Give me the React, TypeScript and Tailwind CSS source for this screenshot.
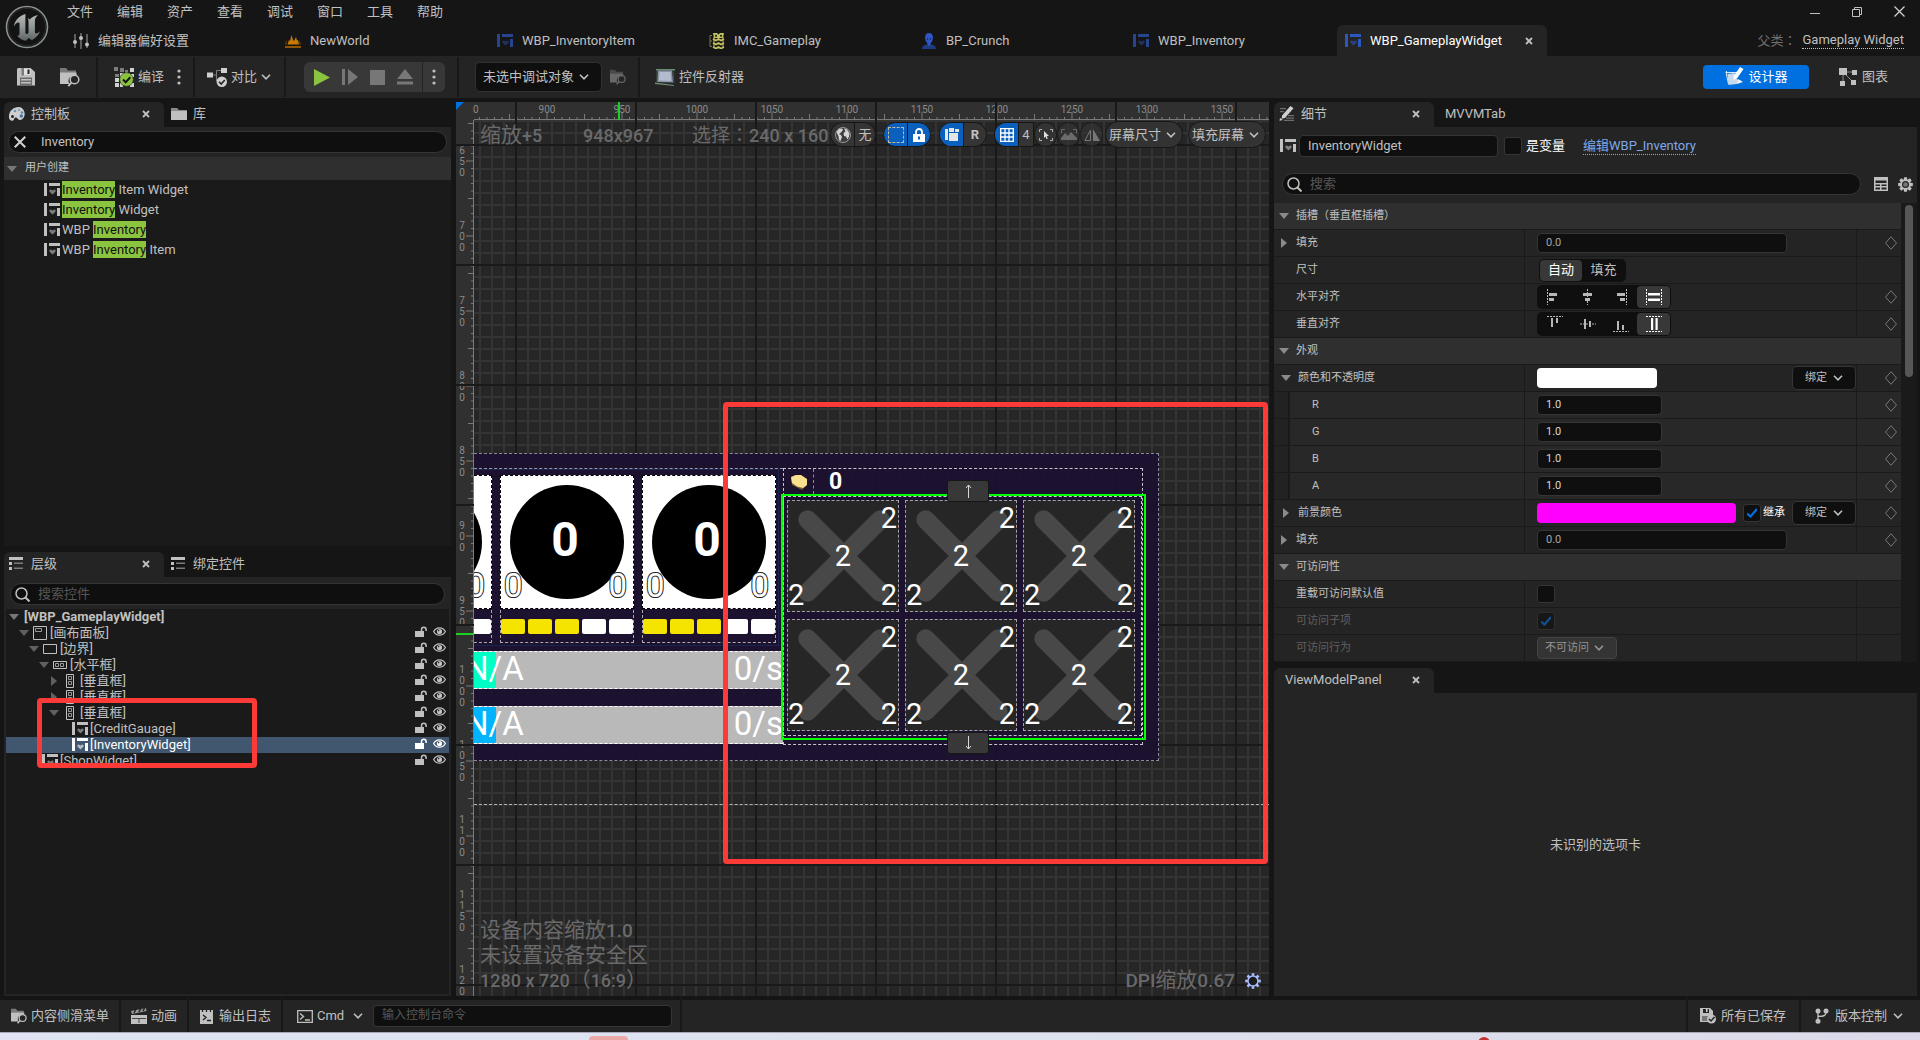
import React, { ReactNode } from "react";
import { clsx } from "clsx";

type IconProps = { className?: string };

/* ---------- icons ---------- */

function WidgetIcon({ className = "text-[#c0c0c0]" }: IconProps) {
  return (
    <svg className={clsx("h-[14px] w-4 shrink-0", className)} viewBox="0 0 16 14" fill="currentColor" aria-hidden="true">
      <path d="M0 0h3v13H0zM5 0h11v3H5zM13 5h3v8h-3z" />
      <path opacity=".6" d="M8.500 11.500 5.600 8.700c-.8-1 .3-2.600 1.700-2 .6.2.9.6 1.200.9.3-.3.6-.7 1.200-.9 1.400-.6 2.500 1 1.700 2z" />
    </svg>
  );
}

function UnrealLogo() {
  return (
    <svg className="size-[44px] shrink-0" viewBox="0 0 44 44" aria-label="Unreal">
      <defs>
        <linearGradient id="metal" x1="0" y1="0" x2="0" y2="1">
          <stop offset="0" stopColor="#b8b8b8" />
          <stop offset=".5" stopColor="#8f9596" />
          <stop offset="1" stopColor="#5e6262" />
        </linearGradient>
      </defs>
      <circle cx="22" cy="22" r="20.5" fill="#131313" stroke="#8c9191" strokeWidth="1.6" />
      <circle cx="22" cy="22" r="18.6" fill="none" stroke="#2a2d2d" strokeWidth="1" />
      <path
        fill="url(#metal)"
        d="M20.500 9C14.600 10.500 9.500 15.500 8.800 21.500c1.700-2.600 3.600-4.300 4.900-3.900.9.300.8 1.300.8 2.400v8.200c0 2.200-.9 2.700-2.500 2.400 2.300 3.200 5.600 4.800 9 5.200l2.700-2.800 3.100 2.200c3.700-1.700 6.700-4.800 8.200-8.900-2.100 2-3.700 2.600-4.600 2-.5-.4-.5-1.200-.5-2.200V15.500c0-2 1.600-4.200 3-5.600-3.400.5-6.600 2.500-8.100 4.500-.6-.8-1.400-1.100-2.400-.9.900.8 1.100 1.600 1.100 2.600v12c-1.300 1.300-3.100 1.500-3.100-.8V14.500c0-2.300 0-4 .1-5.500z"
      />
    </svg>
  );
}

function SlidersIcon() {
  return (
    <svg className="size-4" viewBox="0 0 16 16" fill="#c0c0c0" aria-hidden="true">
      <path opacity=".6" d="M1.300 1h1.400v14H1.300zM7.300 0h1.400v16H7.300zM13.300 1h1.400v14h-1.400z" />
      <circle cx="2" cy="9" r="2" /><circle cx="8" cy="5" r="2" /><circle cx="14" cy="11.500" r="2" />
    </svg>
  );
}

function WorldIcon() {
  return (
    <svg className="size-4" viewBox="0 0 16 16" aria-hidden="true">
      <path fill="#8f5500" d="M0 13h16v2H0z" />
      <path fill="#c77b07" d="M2.500 11.500 4 7l1 1 1.500-6L8 7l1 1 2-4 1 3.500 1-.5 1 4.500z" />
      <path fill="#74480a" d="m0 11.500 1.500-5v5zm16 0-1.500-5v5z" />
    </svg>
  );
}

function MappingIcon() {
  return (
    <svg className="size-4" viewBox="0 0 16 16" fill="none" aria-hidden="true">
      <path stroke="#7c7a45" d="M3 2.500H1v11h2M1 8h2" />
      <path stroke="#c3bf63" strokeWidth="1.800" d="m4 6 3 1.500L9.500 6l2.500 1.500L15 6M4 10l3 1.500L9.500 10l2.500 1.500 3-1.500M4 14l3 1.500L9.500 14l2.500 1.500 3-1.500" />
      <path fill="#c3bf63" d="M4 0h4l1.500 1.500L11 0h4l-1 5h-3.500l-1 1-1-1H5z" />
      <circle cx="7" cy="2.800" r="1" fill="#151515" /><circle cx="12" cy="2.800" r="1" fill="#151515" />
      <path stroke="#c3bf63" d="M5 4v11M14 4v11" />
    </svg>
  );
}

function PersonIcon() {
  return (
    <svg className="size-4" viewBox="0 0 16 16" aria-hidden="true">
      <path fill="#1d3c84" d="M1 16c0-3 2.500-4 4.500-4.500h5C12.500 12 15 13 15 16z" />
      <path fill="#2d57c4" d="M4 4.500C4 2 5.500 0 8 0s4 2 4 4.500c0 3-1.500 5-2.500 5.900V12L8 13l-1.500-1v-1.600C5.500 9.500 4 7.500 4 4.500z" />
      <circle cx="6.400" cy="6" r=".8" fill="#122a66" /><circle cx="9.600" cy="6" r=".8" fill="#122a66" />
    </svg>
  );
}

function SaveIcon() {
  return (
    <svg className="size-[18px]" viewBox="0 0 18 18" aria-hidden="true">
      <path fill="#c0c0c0" d="M1 0h12.500L18 4v13.500H0V1z" />
      <path fill="#6a6a6a" d="M3 9.500h12v8H3z" />
      <path fill="#c0c0c0" d="M4 11h10v1.500H4zm0 3h10v1.500H4z" />
      <path fill="#7b7b7b" d="M4.500 0H7v7.500H4.500z" /><path fill="#e2e2e2" d="M7 .8h6.500v6H7z" /><path fill="#222" d="M10.500 1.500h2v4.500h-2z" />
    </svg>
  );
}

function FolderSearchIcon({ className = "size-5 text-[#c0c0c0]" }: IconProps) {
  return (
    <svg className={className} viewBox="0 0 20 20" aria-hidden="true">
      <path fill="currentColor" opacity=".55" d="M0 1h6l2 2.500h8V6H0z" />
      <path fill="currentColor" d="M0 5.500h16.500V9a5.500 5.500 0 0 0-7 8H0z" />
      <circle cx="14.500" cy="12.500" r="4.300" fill="#242424" stroke="currentColor" strokeWidth="1.500" />
      <path stroke="currentColor" strokeWidth="2" d="m11.300 15.600-3 3.600" />
    </svg>
  );
}

function CompileIcon() {
  return (
    <svg className="size-5" viewBox="0 0 20 20" aria-hidden="true">
      <path fill="#7d7d7d" d="M0 0h4v4H0zM6 1h4v4H6zM11 3h3v3h-3zM1 7h4v3H1z" />
      <path fill="#d0d0d0" d="M16 1h4v4h-4zM12 6h4v3h-4zM6 6h4v4H6zM1 11h4v4H1zM1 16h4v4H1zM16 16h4v4h-4zM16 7h4v3h-4zM6 16h3v4H6z" />
      <circle cx="12.500" cy="12.500" r="6.800" fill="#8bc53f" stroke="#242424" strokeWidth=".6" />
      <path fill="none" stroke="#151515" strokeWidth="2" d="m9 12.500 2.700 2.700 4.600-5" />
    </svg>
  );
}

function DiffIcon() {
  return (
    <svg className="size-5" viewBox="0 0 20 20" aria-hidden="true">
      <path fill="none" stroke="#7d7d7d" d="M5 8h4.500V3.500H14M9.500 8v6H12" />
      <path fill="#d0d0d0" d="M0 5.500h6v5H0zM14 1h6v5h-6z" />
      <circle cx="14.800" cy="14.800" r="5.200" fill="#d0d0d0" />
      <path fill="none" stroke="#242424" strokeWidth="1.600" d="m12 14.800 2.200 2.200 3.600-4" />
    </svg>
  );
}

function DotsIcon() {
  return (
    <svg className="h-4 w-1" viewBox="0 0 4 16" fill="#c0c0c0" aria-hidden="true">
      <circle cx="2" cy="2" r="1.600" /><circle cx="2" cy="8" r="1.600" /><circle cx="2" cy="14" r="1.600" />
    </svg>
  );
}

function Chevron({ className = "text-[#c0c0c0]" }: IconProps) {
  return (
    <svg className={clsx("h-[6px] w-[10px] shrink-0", className)} viewBox="0 0 10 6" fill="none" stroke="currentColor" strokeWidth="1.600" aria-hidden="true">
      <path d="m1 .8 4 4 4-4" />
    </svg>
  );
}

function CloseX({ className = "size-2 text-[#c0c0c0]", weight = 1.8 }: IconProps & { weight?: number }) {
  return (
    <svg className={className} viewBox="0 0 8 8" stroke="currentColor" strokeWidth={weight} aria-hidden="true">
      <path d="m1 1 6 6M7 1 1 7" />
    </svg>
  );
}

function PaletteIcon() {
  return (
    <svg className="h-[14px] w-4" viewBox="0 0 16 14" aria-hidden="true">
      <path fill="#cfcfcf" d="M9.500 0C5 0 .5 3.500 0 8.500c-.3 3 1 5.500 3.500 5.200 1.400-.2 1.300-1.700 2.200-2.700 1-1 2.300-.3 3.300 1 1.300 1.700 4.500 1 6-2 2-4-.5-10-5.500-10z" />
      <circle cx="3.500" cy="9.500" r="1.500" fill="#242424" /><circle cx="6" cy="4" r="1.300" fill="#6d93b8" /><circle cx="10" cy="3" r="1.300" fill="#86a9c9" /><circle cx="13" cy="5.500" r="1.300" fill="#5d86b0" /><circle cx="12.300" cy="9" r="1.700" fill="#3f74ad" />
    </svg>
  );
}

function FolderIcon() {
  return (
    <svg className="h-3 w-4" viewBox="0 0 16 12" aria-hidden="true">
      <path fill="#8a8a8a" d="M0 0h6l2 2h8v2H0z" /><path fill="#c0c0c0" d="M0 3h16v9H0z" />
    </svg>
  );
}

function ListIcon() {
  return (
    <svg className="h-[13px] w-[14px]" viewBox="0 0 14 13" aria-hidden="true">
      <path fill="#c0c0c0" d="M0 0h14v3H0zM0 5h3v3H0zM0 10h3v3H0z" /><path fill="#7b7b7b" d="M5 5.500h9V7H5zM5 10.500h9V12H5z" />
    </svg>
  );
}

function PencilListIcon() {
  return (
    <svg className="size-[15px]" viewBox="0 0 15 15" aria-hidden="true">
      <path fill="#6e6e6e" d="M1 2h6v1.200H1zM1 5h4v1.200H1zM9 9h6v1.200H9zM7 11.500h8v1.200H7zM5 13.800h10V15H5z" />
      <path fill="#d0d0d0" d="m11.500 0 3 2.300L6 12l-3.300.8L3 9.500zM1 12l3 2-3.500.8z" />
    </svg>
  );
}

function SearchIcon() {
  return (
    <svg className="size-[15px] shrink-0" viewBox="0 0 15 15" fill="none" stroke="#c0c0c0" strokeWidth="1.500" aria-hidden="true">
      <circle cx="6.500" cy="6.500" r="5.500" /><path strokeWidth="2" d="m10.500 10.500 4 4" />
    </svg>
  );
}

function TableIcon() {
  return (
    <svg className="size-[14px]" viewBox="0 0 14 14" aria-hidden="true">
      <path fill="#c0c0c0" fillRule="evenodd" d="M0 0h14v14H0zM1.500 3.500V6h11V3.500zm0 4V9H6V7.500zm6 0V9h5V7.500zm-6 3v2H6v-2zm6 0v2h5v-2z" />
    </svg>
  );
}

const TEETH = [0, 45, 90, 135, 180, 225, 270, 315];

function GearIcon() {
  return (
    <svg className="size-[15px]" viewBox="-8 -8 16 16" aria-hidden="true">
      {TEETH.map((a) => (
        <path key={a} transform={`rotate(${a})`} fill="#c0c0c0" d="M-1.500-7.800h3l.5 3h-4z" />
      ))}
      <circle r="4.600" fill="none" stroke="#c0c0c0" strokeWidth="1.700" />
      <circle r="2.500" fill="#777" />
    </svg>
  );
}

function DpiGearIcon() {
  return (
    <svg className="size-4" viewBox="-8 -8 16 16" aria-hidden="true">
      {TEETH.map((a) => (
        <path key={a} transform={`rotate(${a})`} fill="#a9bfff" d="M-1.300-7.800h2.600v2.600h-2.600z" />
      ))}
      <circle r="5" fill="#1c1c1c" stroke="#a9bfff" strokeWidth="1.500" />
    </svg>
  );
}

function LockIcon({ bright }: { bright?: boolean }) {
  return (
    <svg className={clsx("h-[11px] w-3", bright ? "text-white" : "text-[#c0c0c0]")} viewBox="0 0 12 11" aria-hidden="true">
      <path fill="currentColor" d="M0 5h9v6H0z" />
      <path fill="none" stroke="currentColor" strokeWidth="1.500" d="M6.500 5V3.500a2.300 2.300 0 0 1 4.600 0V5" />
    </svg>
  );
}

function EyeIcon({ bright }: { bright?: boolean }) {
  return (
    <svg className={clsx("h-[9px] w-[13px]", bright ? "text-white" : "text-[#c0c0c0]")} viewBox="0 0 13 9" aria-hidden="true">
      <path fill="none" stroke="currentColor" strokeWidth="1.200" d="M.6 4.500C2 2 4 .8 6.500.8S11 2 12.400 4.500C11 7 9 8.200 6.500 8.200S2 7 .6 4.500z" />
      <circle cx="6.500" cy="4.500" r="2.600" fill="currentColor" /><circle cx="5.700" cy="3.600" r=".8" fill="#333" />
    </svg>
  );
}

function Triangle({ open, className = "text-[#777]" }: { open: boolean; className?: string }) {
  return open ? (
    <svg className={clsx("h-[6px] w-[10px]", className)} viewBox="0 0 10 6" fill="currentColor" aria-hidden="true"><path d="M0 0h10L5 6z" /></svg>
  ) : (
    <svg className={clsx("h-[10px] w-[6px]", className)} viewBox="0 0 6 10" fill="currentColor" aria-hidden="true"><path d="M0 0v10l6-5z" /></svg>
  );
}

function CanvasPanelIcon() {
  return <svg className="size-[14px]" viewBox="0 0 14 14" fill="none" stroke="#c0c0c0" aria-hidden="true"><path d="M.5.500h13v13H.5z" /><path stroke="#999" d="M2.500 2.500h6v3h-6z" /></svg>;
}
function BorderIcon() {
  return <svg className="h-[10px] w-[14px]" viewBox="0 0 14 10" fill="none" stroke="#c0c0c0" aria-hidden="true"><path d="M.5.500h13v9H.5z" /></svg>;
}
function HBoxIcon() {
  return <svg className="h-2 w-[14px]" viewBox="0 0 14 8" fill="none" stroke="#c0c0c0" aria-hidden="true"><path d="M.5.500h13v7H.5z" /><path stroke="#999" d="M2.500 2.500h3v3h-3zM7.500 2.500h3v3h-3z" /></svg>;
}
function VBoxIcon() {
  return <svg className="h-[14px] w-2" viewBox="0 0 8 14" fill="none" stroke="#c0c0c0" aria-hidden="true"><path d="M.5.500h7v13h-7z" /><path stroke="#999" d="M2.500 2.500h3v3h-3zM2.500 7.500h3v3h-3z" /></svg>;
}

/* ---------- shared controls ---------- */

function Picker({ label, value, className, chevron, pad = "pl-2 pr-6 text-[13px]" }: { label: string; value: string; className?: string; chevron?: string; pad?: string }) {
  return (
    <span className={clsx("relative flex shrink-0 items-center", className)}>
      <select aria-label={label} className={clsx("h-full w-full appearance-none bg-transparent outline-none", pad)}>
        <option>{value}</option>
      </select>
      <span className="pointer-events-none absolute right-2 flex"><Chevron className={chevron} /></span>
    </span>
  );
}

function Check({ id, checked = false, disabled = false, label }: { id: string; checked?: boolean; disabled?: boolean; label?: string }) {
  return (
    <span className={clsx("relative flex size-[18px] shrink-0", disabled && "opacity-60")}>
      <input id={id} type="checkbox" defaultChecked={checked} disabled={disabled} aria-label={label}
        className="peer size-full appearance-none rounded-[3px] border border-[#353535] bg-[#0f0f0f]" />
      <svg className="pointer-events-none absolute inset-1 hidden peer-checked:block" viewBox="0 0 10 10" fill="none" stroke="#0070e0" strokeWidth="2.200" aria-hidden="true">
        <path d="m0 5.500 3.500 3L10 1" />
      </svg>
    </span>
  );
}

function PanelTab({ icon, title, active, onlyText }: { icon?: ReactNode; title: string; active?: boolean; onlyText?: boolean }) {
  return (
    <div className={clsx("flex h-[25px] items-center rounded-t-md pb-[2px]", active ? "w-[160px] bg-[#242424]" : "")}>
      <button className={clsx("flex flex-1 items-center text-left text-[13px] leading-4", onlyText ? "pl-[11px]" : active ? "pl-[5px]" : "pl-[7px]")}>
        {icon && <span className="flex w-[22px] items-center">{icon}</span>}
        {title}
      </button>
      {active && <button aria-label={`关闭 ${title}`} className="mr-[14px] flex"><CloseX /></button>}
    </div>
  );
}

/* ---------- title bar ---------- */

const MENUS = ["文件", "编辑", "资产", "查看", "调试", "窗口", "工具", "帮助"];

const DOCS: { title: string; icon: ReactNode; active?: boolean }[] = [
  { title: "编辑器偏好设置", icon: <SlidersIcon /> },
  { title: "NewWorld", icon: <WorldIcon /> },
  { title: "WBP_InventoryItem", icon: <WidgetIcon className="text-[#27458f]" /> },
  { title: "IMC_Gameplay", icon: <MappingIcon /> },
  { title: "BP_Crunch", icon: <PersonIcon /> },
  { title: "WBP_Inventory", icon: <WidgetIcon className="text-[#27458f]" /> },
  { title: "WBP_GameplayWidget", icon: <WidgetIcon className="text-[#2b57c0]" />, active: true },
];

function TitleBar() {
  return (
    <header className="flex h-14 pl-[5px]">
      <div className="pt-[5px]"><UnrealLogo /></div>
      <div className="flex min-w-0 flex-1 flex-col">
        <div className="flex h-[25px] items-center justify-between pb-[2px] pl-[18px] pr-[15px]">
          <nav className="flex gap-6">
            {MENUS.map((m) => <button key={m} className="text-[13px] leading-4">{m}</button>)}
          </nav>
          <div className="flex items-center gap-8">
            <button aria-label="最小化" className="flex"><svg className="size-[10px]" viewBox="0 0 10 10" stroke="#c0c0c0"><path d="M0 6.500h10" /></svg></button>
            <button aria-label="还原" className="flex"><svg className="size-[10px]" viewBox="0 0 10 10" fill="none" stroke="#c0c0c0"><path d="M.5 2.500h7v7h-7zM2.500 2V.500h7v7H8" /></svg></button>
            <button aria-label="关闭" className="flex"><svg className="size-[11px]" viewBox="0 0 11 11" stroke="#d0d0d0" strokeWidth="1.300"><path d="m.5.500 10 10M10.500.500l-10 10" /></svg></button>
          </div>
        </div>
        <div className="flex h-[31px] items-center pl-4">
          {DOCS.map((d) => (
            <div key={d.title} className={clsx("flex h-full items-center rounded-t-md pl-2", d.active ? "w-[210px] bg-[#242424] text-white" : "w-[212px]")}>
              <button className="flex flex-1 items-center gap-[9px] text-[13px] leading-4">{d.icon}{d.title}</button>
              {d.active && <button aria-label="关闭标签" className="mr-[14px] flex"><CloseX /></button>}
            </div>
          ))}
          <div className="ml-auto flex items-center pr-4 text-[13px] leading-4">
            <span className="font-['Roboto','Noto_Sans_CJK_TC',sans-serif] text-[#707070]">父类：</span>
            <a href="#parent" className="ml-[6px] border-b border-dotted border-[#c0c0c0]">Gameplay Widget</a>
          </div>
        </div>
      </div>
    </header>
  );
}

function Sep() {
  return <span className="h-10 w-[2px] shrink-0 bg-[#181818]" />;
}

function Toolbar() {
  return (
    <div className="flex h-[42px] items-center bg-[#242424] text-[13px] leading-4">
      <div className="flex w-[96px] items-center gap-[25px] pl-[17px]">
        <button aria-label="保存" className="flex"><SaveIcon /></button>
        <button aria-label="浏览" className="flex"><FolderSearchIcon /></button>
      </div>
      <Sep />
      <div className="flex w-[95px] items-center justify-between pl-4 pr-3">
        <button className="flex items-center gap-1"><CompileIcon />编译</button>
        <button aria-label="编译选项" className="flex"><DotsIcon /></button>
      </div>
      <Sep />
      <div className="flex w-[89px] items-center pl-3">
        <button className="flex items-center gap-1"><DiffIcon />对比<Chevron /></button>
      </div>
      <Sep />
      <div className="ml-[18px] mr-3 flex h-[30px] items-center rounded-md bg-[#383838]">
        <div className="flex h-full w-[118px] items-center gap-[12px] pl-[10px]">
          <button aria-label="运行" className="flex"><svg className="h-[17px] w-4" viewBox="0 0 16 17"><path fill="#8bc53f" d="M0 0v17l16-8.500z" /></svg></button>
          <button aria-label="步进" className="flex"><svg className="size-4" viewBox="0 0 16 16" fill="#777"><path d="M0 0h3v16H0zM6 0v16l10-8z" /></svg></button>
          <button aria-label="停止" className="flex"><span className="size-[15px] bg-[#777]" /></button>
          <button aria-label="弹出" className="flex"><svg className="size-4" viewBox="0 0 16 16" fill="#777"><path d="M8 0 0 10h16zM0 12.500h16v3H0z" /></svg></button>
        </div>
        <span className="h-full w-px bg-[#242424]" />
        <button aria-label="运行选项" className="flex h-full w-[22px] items-center justify-center"><DotsIcon /></button>
      </div>
      <Sep />
      <Picker label="调试对象" value="未选中调试对象" className="ml-[16px] h-[30px] w-[127px] rounded-[5px] border border-[#303030] bg-[#0f0f0f]" pad="pl-[7px] pr-6 text-[13px]" chevron="text-[#c0c0c0] mr-1" />
      <button aria-label="查找调试对象" className="ml-2 flex"><FolderSearchIcon className="size-4 text-[#686868]" /></button>
      <span className="ml-3 flex"><Sep /></span>
      <button className="ml-[15px] flex items-center gap-1">
        <svg className="size-5" viewBox="0 0 20 20" aria-hidden="true">
          <path fill="#6f8f74" d="M1 2h19v1.500H1zM0 15.500l19 2.500v1L0 17z" />
          <path fill="#8b93a8" d="M3 3.500h14l1 12L2 15z" /><path fill="#b3bccf" d="M4.500 5h11l.8 9L4 13.500z" />
          <path stroke="#3c5c42" d="M2 4v11M18 4l1 12" />
        </svg>
        控件反射器
      </button>
      <div className="ml-auto flex items-center gap-[30px] pr-[32px]">
        <button className="flex h-6 w-[106px] items-center justify-center gap-1 rounded bg-[#0070e0] text-white">
          <svg className="size-5" viewBox="0 0 20 20" aria-hidden="true">
            <path fill="none" stroke="#dbe8f5" d="M1.500 5.500h12M2.500 4v4l2 9" /><path fill="#c9daea" d="m3.500 7 7-1 2 6 5 2-5 3-8 1z" />
            <path fill="#fff" d="m16 0 3.500 2L13 11.500 9.500 13l.2-4z" /><path fill="#eef4fa" d="m14 12 5 3-6 2z" />
          </svg>
          设计器
        </button>
        <button className="flex items-center gap-[5px]">
          <svg className="size-[18px]" viewBox="0 0 18 18" aria-hidden="true">
            <path fill="none" stroke="#888" d="M4 4h11M4 4v11M4 4l11 11" /><path fill="#c0c0c0" d="M0 0h8v7H0zM13 2h5v5h-5zM1 13h5v5H1zM12 12h5v5h-5z" />
          </svg>
          图表
        </button>
      </div>
    </div>
  );
}

/* ---------- left column ---------- */

function Hit() {
  return <mark className="bg-[#8bc53f] py-px text-[#111]">Inventory</mark>;
}

function PalettePanel() {
  const rows: ReactNode[] = [
    <><Hit /> Item Widget</>,
    <><Hit /> Widget</>,
    <>WBP <Hit /></>,
    <>WBP <Hit /> Item</>,
  ];
  return (
    <section className="flex min-h-0 flex-1 flex-col">
      <div className="flex"><PanelTab active icon={<PaletteIcon />} title="控制板" /><PanelTab icon={<FolderIcon />} title="库" /></div>
      <div className="bg-[#242424] px-1 py-1">
        <div className="flex h-[22px] items-center rounded-full border border-[#353535] bg-[#0f0f0f] pl-[4px]">
          <button aria-label="清除" className="flex"><CloseX weight={1.2} className="size-[14px] text-[#d0d0d0]" /></button>
          <input aria-label="搜索控制板" defaultValue="Inventory" className="ml-[14px] h-5 flex-1 bg-transparent pb-[2px] text-[13px] outline-none" />
        </div>
      </div>
      <button className="flex h-[23px] items-center bg-[#2f2f2f] pl-[3px] text-left text-[11px]"><Triangle open /><span className="ml-2">用户创建</span></button>
      <ul className="flex-1 bg-[#1a1a1a] text-[13px]">
        {rows.map((r, i) => (
          <li key={i} className="flex h-5 items-center whitespace-pre pl-10 leading-4"><WidgetIcon /><span className="ml-[2px]">{r}</span></li>
        ))}
      </ul>
    </section>
  );
}

type Node = { depth: number; text: string; icon?: ReactNode; state: "open" | "closed" | "leaf"; selected?: boolean };
const NODES: Node[] = [
  { depth: 1, text: "[画布面板]", icon: <CanvasPanelIcon />, state: "open" },
  { depth: 2, text: "[边界]", icon: <BorderIcon />, state: "open" },
  { depth: 3, text: "[水平框]", icon: <HBoxIcon />, state: "open" },
  { depth: 4, text: "[垂直框]", icon: <VBoxIcon />, state: "closed" },
  { depth: 4, text: "[垂直框]", icon: <VBoxIcon />, state: "closed" },
  { depth: 4, text: "[垂直框]", icon: <VBoxIcon />, state: "open" },
  { depth: 5, text: "[CreditGauage]", icon: <WidgetIcon />, state: "leaf" },
  { depth: 5, text: "[InventoryWidget]", icon: <WidgetIcon className="text-white" />, state: "leaf", selected: true },
  { depth: 2, text: "[ShopWidget]", icon: <WidgetIcon />, state: "leaf" },
];
const INDENT = ["pl-0", "pl-[10px]", "pl-5", "pl-[30px]", "pl-10", "pl-[50px]"];

function HierarchyPanel() {
  return (
    <section className="flex min-h-0 flex-1 flex-col">
      <div className="flex"><PanelTab active icon={<ListIcon />} title="层级" /><PanelTab icon={<ListIcon />} title="绑定控件" /></div>
      <div className="flex flex-1 flex-col bg-[#242424] px-[2px] pb-[2px]">
        <div className="px-1 pb-1 pt-[6px]">
          <div className="flex h-[22px] items-center rounded-full border border-[#353535] bg-[#0f0f0f] pl-[4px]">
            <SearchIcon />
            <input aria-label="搜索控件" placeholder="搜索控件" className="ml-2 h-5 flex-1 bg-transparent pb-[2px] text-[13px] outline-none placeholder:text-[#575757]" />
          </div>
        </div>
        <ul className="relative flex-1 bg-[#1a1a1a] text-[13px] leading-4">
          <li className="flex h-4 items-center pl-[3px] font-bold"><Triangle open /><span className="ml-[5px]">[WBP_GameplayWidget]</span></li>
          {NODES.map((n, i) => (
            <li key={i} className={clsx("flex h-4 items-center pr-[3px]", n.selected && "bg-[#40576f] text-white")}>
              <span className={clsx("flex items-center", INDENT[n.depth])}>
                <span className="ml-[3px] flex w-[10px] justify-center">{n.state !== "leaf" && <Triangle open={n.state === "open"} className="text-[#606060]" />}</span>
                <span className="ml-[3px] flex w-4 justify-center">{n.icon}</span>
                <span className="ml-[2px]">{n.text}</span>
              </span>
              <span className="ml-auto flex items-center gap-[6px] pb-[3px]">
                <button aria-label="锁定" className="flex"><LockIcon bright={n.selected} /></button>
                <button aria-label="可见性" className="flex"><EyeIcon bright={n.selected} /></button>
              </span>
            </li>
          ))}
          <li aria-hidden="true" className="pointer-events-none absolute left-[31px] top-[89px] h-[70px] w-[220px] rounded border-[5px] border-[#fc3a37]" />
        </ul>
      </div>
    </section>
  );
}

/* ---------- designer canvas ---------- */

const PX_PER_UNIT = 1.5;
const H_LABELS = [900, 950, 1000, 1050, 1100, 1150, 1200, 1250, 1300, 1350];
const V_LABELS = [650, 700, 750, 800, 850, 900, 950, 1000, 1050, 1100, 1150, 1200];
const TICKS = Array.from({ length: 115 }, (_, i) => i);

function Rulers() {
  return (
    <div aria-hidden="true" className="text-[10px] leading-[11px] text-[#8a8a8a]">
      <div className="absolute inset-x-0 top-0 h-[18px] bg-[#303030]" />
      <div className="absolute inset-y-0 left-0 w-[18px] bg-[#303030]" />
      <svg className="absolute left-0 top-0 h-[18px] w-full" stroke="#7a7a7a">
        <path d="M18 17.500h1000" />
        {TICKS.slice(1).map((i) => {
          const x = 16 + i * 5 * PX_PER_UNIT;
          const len = i % 10 === 0 ? 7 : i % 5 === 0 ? 5 : 2;
          return <path key={i} d={`M${x} ${17 - len}v${len}`} />;
        })}
      </svg>
      <svg className="absolute left-0 top-0 h-full w-[18px]" stroke="#7a7a7a">
        <path d="M17.500 18v1000" />
        {TICKS.map((i) => {
          const y = 59 + (i - 5) * 5 * PX_PER_UNIT;
          const len = i % 10 === 5 ? 7 : i % 5 === 0 ? 5 : 2;
          return y > 18 ? <path key={i} d={`M${17 - len} ${y}h${len}`} /> : null;
        })}
      </svg>
      <span className="absolute left-[17px] top-[2px]">0</span>
      {H_LABELS.map((n) => (
        <span key={n} className="absolute top-[2px] w-10 text-center" style={{ left: 71 + (n - 900) * PX_PER_UNIT }}>{n}</span>
      ))}
      {V_LABELS.map((n) => {
        const d = String(n).split("");
        return (
          <span key={n} className="absolute left-0 flex w-3 flex-col text-center" style={{ top: 59 + (n - 650) * PX_PER_UNIT - d.length * 5.5 }}>
            {d.map((c, i) => <span key={i}>{c}</span>)}
          </span>
        );
      })}
      <svg className="absolute left-0 top-0 size-2" viewBox="0 0 8 8"><path fill="#0070e0" d="M0 0h8L0 8z" /></svg>
      <span className="absolute left-[162px] top-0 h-[18px] w-[2px] bg-[#1fd11f]" />
      <span className="absolute left-0 top-[531px] h-[2px] w-[18px] bg-[#1fd11f]" />
    </div>
  );
}

const COUNT = "absolute bottom-1 text-[33px] leading-9 text-white [-webkit-text-stroke:2px_#222] [paint-order:stroke_fill]";

/* The first card is scrolled mostly out of view, so only its right counter is drawn. */
function AbilityCard({ partial }: { partial?: boolean }) {
  return (
    <div className="w-[134px] shrink-0 border border-dashed border-[#aaa]">
      <div className="relative -m-px flex h-[134px] items-center justify-center border border-dashed border-black bg-white">
        <div className="flex size-[114px] items-center justify-center rounded-full bg-black pb-1 pr-1 text-[48px] font-bold leading-none text-white">{!partial && "0"}</div>
        {!partial && <span className={clsx(COUNT, "left-[3px]")}>0</span>}
        <span className={clsx(COUNT, "right-[6px]")}>0</span>
      </div>
      <div className="flex gap-[3px] pb-2 pt-[11px]">
        {[1, 1, 1, 0, 0].map((on, i) => <span key={i} className={clsx("h-[15px] w-6 rounded-[2px]", on ? "bg-[#f5e300]" : "bg-white")} />)}
      </div>
    </div>
  );
}

function StatBar({ fill }: { fill: string }) {
  return (
    <div className="flex h-[38px] w-full border-y border-dashed border-white bg-[#b9b9b9] text-[33px] leading-[34px] text-white">
      <div className={clsx("h-full w-[22px] shrink-0 overflow-visible whitespace-nowrap", fill)}><span className="-ml-[9px]">N/A</span></div>
      <span className="ml-auto">0/s</span>
    </div>
  );
}

function Slot() {
  return (
    <div className="relative flex size-28 items-center justify-center border border-dashed border-[#a5a0ab] bg-[#262626] text-[29px] leading-none text-white">
      <svg className="absolute inset-0 size-full" viewBox="0 0 112 112" stroke="#484848" strokeWidth="19" strokeLinecap="round" aria-hidden="true"><path d="m20 19 74 74M94 19 20 93" /></svg>
      <span className="relative">2</span>
      <span className="absolute right-px top-[3px]">2</span>
      <span className="absolute bottom-px left-0">2</span>
      <span className="absolute bottom-px right-px">2</span>
    </div>
  );
}

const NUDGE = "absolute left-[164px] z-10 flex h-[22px] w-[42px] items-center justify-center rounded-[3px] border border-[#161616] bg-[#383838] text-[#d8d8d8]";

function HudPreview() {
  return (
    <div className="absolute left-[18px] top-[351px] flex h-[308px] w-[685px] border-y border-r border-dashed border-[#8f8a98] bg-[#1c1030f0] pb-[15px] pr-[15px] pt-[14px]">
      <div className="flex w-[309px] flex-col overflow-hidden border-t border-dashed border-[#9a97a5]">
        <div className="-ml-[117px] flex w-[422px] shrink-0 gap-2 border border-[#1b2450] pb-[2px] pt-[5px]"><AbilityCard partial /><AbilityCard /><AbilityCard /></div>
        <div className="mt-[5px] flex flex-col gap-[17px]"><StatBar fill="bg-[#00ffc4]" /><StatBar fill="bg-[#00b4ff]" /></div>
      </div>
      <div className="flex w-[360px] flex-col border border-dashed border-[#c8c5d0]">
        <div className="flex h-[25px] items-center">
          <span className="flex h-full w-[30px] items-center justify-center border-r border-dashed border-[#8f8a98]">
            <svg className="size-4" viewBox="0 0 16 16" aria-hidden="true"><path fill="#6e5c2c" d="m0 4 4-3 9 5 2 6-4 4-10-5z" /><path fill="#fbe08e" d="M5 1h5l6 4v6l-4 3-6-1.500-5-3.500L0 3z" /></svg>
          </span>
          <span className="ml-[15px] text-[23px] font-bold leading-none text-white">0</span>
        </div>
        <div className="relative -ml-[3px] h-[246px] w-[365px] shrink-0 border-2 border-[#00ff00]">
          <button aria-label="上移" className={clsx(NUDGE, "-top-4")}><svg className="h-[14px] w-[7px]" viewBox="0 0 7 14" fill="none" stroke="currentColor"><path d="M3.500 14V1M1 4l2.500-3L6 4" /></svg></button>
          <div className="grid h-[240px] w-[359px] grid-cols-[112px_112px_112px] content-start gap-x-[6px] gap-y-[7px] border border-dashed border-[#c8c5d0] pl-[3px] pt-[3px]">
            {[0, 1, 2, 3, 4, 5].map((i) => <Slot key={i} />)}
          </div>
          <button aria-label="下移" className={clsx(NUDGE, "-bottom-4")}><svg className="h-[14px] w-[7px]" viewBox="0 0 7 14" fill="none" stroke="currentColor"><path d="M3.500 0v13M1 10l2.500 3L6 10" /></svg></button>
        </div>
      </div>
    </div>
  );
}

const PILL = "flex h-[25px] items-center overflow-hidden rounded-full border border-[#161616]";
const ROUND = "flex h-[25px] w-[23px] items-center justify-center rounded-full border border-[#161616] bg-[#333]";

function CanvasTools() {
  return (
    <div className="absolute right-[3px] top-[19px] flex items-center text-[13px] leading-4">
      <div className={clsx(PILL, "mr-[7px] w-[46px] bg-[#353535]")}>
        <button aria-label="本地化预览" className="flex h-full w-6 items-center justify-center border-r border-[#161616]">
          <svg className="size-4" viewBox="0 0 16 16"><circle cx="8" cy="8" r="7.500" fill="#3c3c3c" stroke="#999" /><path fill="#d5d5d5" d="M1.500 5 4 2l3-.5 1 1.500-2 2.500L4 7l2 1 1 2-1.500 4L4 13l-.5-3.500zM9 1.500l3 1 2.500 4-.5 3-1.500 3-1.500-3-2-.5-.5-3 2-1.500z" /></svg>
        </button>
        <button className="flex-1">无</button>
      </div>
      <div className={clsx(PILL, "mr-2 w-12 bg-[#0b5fbd]")}>
        <button aria-label="显示虚线轮廓" className="flex h-full w-6 items-center justify-center border-r border-[#161616]"><span className="size-4 border border-dashed border-[#c5b89a]" /></button>
        <button aria-label="遵循锁定" className="flex flex-1 justify-center"><svg className="h-[14px] w-3" viewBox="0 0 12 14"><path fill="#fff" fillRule="evenodd" d="M0 6h12v8H0zm5 2.500v3h2v-3z" /><path fill="none" stroke="#fff" strokeWidth="1.800" d="M3 6V4a3 3 0 0 1 6 0v2" /></svg></button>
      </div>
      <div className={clsx(PILL, "mr-[7px] w-12 bg-[#353535]")}>
        <button aria-label="布局" className="flex h-full w-6 items-center justify-center border-r border-[#161616] bg-[#0b5fbd]"><svg className="size-[14px]" viewBox="0 0 14 14" fill="#e5e5e5"><path d="M0 1h3v11H0zM4 0h5v4H4zM10 1h4v3h-4zM4 5h9v8H4z" /></svg></button>
        <button className="flex-1 font-bold">R</button>
      </div>
      <div className={clsx(PILL, "w-10 rounded-r-lg bg-[#353535]")}>
        <button aria-label="网格对齐" className="flex h-full w-6 items-center justify-center border-r border-[#161616] bg-[#0b5fbd]"><svg className="size-[14px]" viewBox="0 0 14 14" fill="none" stroke="#fff" strokeWidth="1.300"><path d="M.7.700h12.600v12.600H.7zM5 0v14M9 0v14M0 5h14M0 9h14" /></svg></button>
        <button className="flex-1">4</button>
      </div>
      <button aria-label="选择模式" className={ROUND}><svg className="size-[14px]" viewBox="0 0 14 14"><path fill="none" stroke="#b0b0b0" d="M.5 4V1.500H3M11 1.500h2.500V4M.5 10v2.500H3M11 12.500h2.500V10" /><path fill="#e0e0e0" d="m5 3 5 5H7.800l1 2.500-1.300.5-1-2.500L5 10z" /></svg></button>
      <button aria-label="图像预览" className={clsx(ROUND, "opacity-70")}><svg className="h-3 w-4" viewBox="0 0 16 12"><path fill="none" stroke="#888" d="M.5 4V.500H4M12 .500h3.500V4" /><path fill="#888" d="M0 11V9l4-5 3 3 3-4 6 6v2z" /></svg></button>
      <button aria-label="翻转预览" className={clsx(ROUND, "mr-[2px] opacity-70")}><svg className="h-3 w-4" viewBox="0 0 16 12"><path fill="none" stroke="#999" d="M6.500 1v10.500H1z" /><path fill="#999" d="M9 0v12h7z" /></svg></button>
      <Picker label="屏幕尺寸" value="屏幕尺寸" className="mr-[5px] h-[27px] w-[78px] rounded-full border border-[#161616] bg-[#333]" pad="pl-[3px] pr-5 text-[13px]" chevron="-mr-[2px] text-[#c0c0c0]" />
      <Picker label="填充屏幕" value="填充屏幕" className="h-[27px] w-[78px] rounded-full border border-[#161616] bg-[#333]" pad="pl-[3px] pr-5 text-[13px]" chevron="-mr-[2px] text-[#c0c0c0]" />
    </div>
  );
}

function Designer() {
  return (
    <main className="relative min-w-0 flex-1 overflow-hidden bg-[#262626]">
      <div className="absolute inset-0 bg-[linear-gradient(90deg,#343434_2px,transparent_2px),linear-gradient(#343434_2px,transparent_2px)] bg-[size:12px_12px] bg-[position:11px_6px]" />
      <Rulers />
      <div className="absolute inset-0 bg-[linear-gradient(90deg,#191919_2px,transparent_2px),linear-gradient(#191919_2px,transparent_2px)] bg-[size:120px_120px] bg-[position:59px_42px]" />
      <div className="absolute bottom-[191px] left-[18px] right-0 border-b border-dashed border-[#b5b5b5]" />
      <div className="absolute left-6 top-[21px] flex items-center text-[18px] font-medium leading-6 text-[#6a6a6a]">
        <span className="w-[103px]"><span className="text-[21px] font-normal">缩放</span>+5</span>
        <span className="w-[109px]">948x967</span>
        <span><span className="font-['Roboto','Noto_Sans_CJK_TC',sans-serif] text-[19px] font-normal">选择：</span>240 x 160</span>
      </div>
      <CanvasTools />
      <HudPreview />
      <div className="absolute bottom-[3px] left-6 text-[19px] font-medium leading-[25px] text-[#6a6a6a]">
        <p><span className="text-[21px] font-normal">设备内容缩放</span>1.0</p>
        <p className="text-[21px] font-normal">未设置设备安全区</p>
        <p className="text-[18px]">1280 x 720<span className="text-[21px] font-normal">（</span>16:9<span className="text-[21px] font-normal">）</span></p>
      </div>
      <div className="absolute bottom-[3px] right-2 flex items-center gap-[10px] text-[19px] font-medium leading-[25px] text-[#6a6a6a]">
        <span>DPI<span className="text-[21px] font-normal">缩放</span>0.67</span>
        <button aria-label="DPI 设置" className="flex"><DpiGearIcon /></button>
      </div>
      <div aria-hidden="true" className="pointer-events-none absolute left-[267px] right-px top-[300px] h-[462px] rounded border-[5px] border-[#fc3a37]" />
    </main>
  );
}

/* ---------- details ---------- */

function Category({ title }: { title: string }) {
  return (
    <button className="flex h-[27px] items-center border-b border-[#1a1a1a] bg-[#2f2f2f] pl-[5px] text-left text-[11px]">
      <Triangle open className="text-[#8a8a8a]" /><span className="ml-[7px]">{title}</span>
    </button>
  );
}

function Row({ label, arrow, nested, child, disabled, reset = true, children }: { label: string; arrow?: "open" | "closed"; nested?: boolean; child?: boolean; disabled?: boolean; reset?: boolean; children?: ReactNode }) {
  return (
    <div className={clsx("flex h-[27px] border-b border-[#1a1a1a] text-[11px]", child ? "bg-[#282828]" : "bg-[#242424]")}>
      <div className={clsx("flex w-[251px] shrink-0 items-center border-r border-[#1a1a1a]", disabled && "text-[#606060]")}>
        {child ? (
          <><span className="h-full w-4 border-r-2 border-[#1a1a1a] bg-[#222]" /><span className="ml-[22px]">{label}</span></>
        ) : (
          <><span className={clsx("flex w-[10px] justify-center", nested ? "ml-[7px]" : "ml-[5px]")}>{arrow && <Triangle open={arrow === "open"} className="text-[#8a8a8a]" />}</span><span className="ml-[7px]">{label}</span></>
        )}
      </div>
      <div className="flex min-w-0 flex-1 items-center pl-3">{children}</div>
      <div className="flex w-[45px] shrink-0 items-center justify-end border-l border-[#1a1a1a] pr-[3px]">
        {reset && <button aria-label={`重置 ${label}`} className="flex"><svg className="size-[14px]" viewBox="0 0 14 14" fill="none" stroke="#787878"><path d="m7 .7 5.500 6.300L7 13.300 1.500 7z" /></svg></button>}
      </div>
    </div>
  );
}

function NumberBox({ label, value, wide }: { label: string; value: string; wide?: boolean }) {
  return <input aria-label={label} defaultValue={value} className={clsx("h-5 rounded border border-[#353535] bg-[#0f0f0f] pb-[2px] pl-2 text-[11px] outline-none", wide ? "w-[250px] text-[#a8a8a8]" : "w-[125px] text-[#d8d8d8]")} />;
}

function AlignGroup({ label, icons }: { label: string; icons: ReactNode[] }) {
  return (
    <div role="group" aria-label={label} className="flex h-6 rounded-[5px] bg-[#0f0f0f] p-px">
      {icons.map((ic, i) => (
        <button key={i} aria-label={`${label} ${i + 1}`} className={clsx("flex w-[33px] items-center justify-center rounded", i === 3 ? "bg-[#383838] text-white" : "text-[#b8b8b8]")}>
          <svg className="size-4" viewBox="0 0 16 16" fill="currentColor">{ic}</svg>
        </button>
      ))}
    </div>
  );
}

const dash = { fill: "none", stroke: "currentColor", strokeDasharray: "2 1" };
const H_ICONS = [
  <><path {...dash} d="M.5 0v16" /><path d="M2 4h8v3H2zM2 9h5v3H2z" /></>,
  <><path {...dash} d="M7.500 0v16" /><path d="M3 4h9v3H3zM5 9h5v3H5z" /></>,
  <><path {...dash} d="M13.500 0v16" /><path d="M4 4h8v3H4zM7 9h5v3H7z" /></>,
  <><path {...dash} d="M.5 0v16M15.500 0v16" /><path d="M2 4h12v2.500H2zM2 9.500h12V12H2z" /></>,
];
const V_ICONS = [
  <><path {...dash} d="M0 .500h16" /><path d="M4 2h2v9H4zM9 2h2v5H9z" /></>,
  <><path {...dash} d="M0 8h16" /><path d="M4 3h2v10H4zM9 5h2v6H9z" /></>,
  <><path {...dash} d="M0 15.500h16" /><path d="M4 5h2v9H4zM9 9h2v5H9z" /></>,
  <><path {...dash} d="M0 .500h16M0 15.500h16" /><path d="M5 2h2.200v12H5zM9.500 2h2.200v12H9.500z" /></>,
];

function Bind() {
  return <Picker label="绑定" value="绑定" className="ml-auto h-6 w-16 rounded-[5px] border border-[#353535] bg-[#0f0f0f]" pad="pl-3 pr-6 text-[11px]" chevron="text-[#c0c0c0] mr-1" />;
}

function DetailsPanel() {
  return (
    <section className="flex flex-col">
      <div className="flex"><PanelTab active icon={<PencilListIcon />} title="细节" /><PanelTab onlyText title="MVVMTab" /></div>
      <div className="bg-[#242424]">
        <div className="flex items-center pl-[6px] pt-2 text-[13px] leading-4">
          <WidgetIcon />
          <input aria-label="控件名称" defaultValue="InventoryWidget" className="ml-[3px] h-[22px] w-[199px] rounded border border-[#353535] bg-[#0f0f0f] pb-[2px] pl-2 text-[13px] outline-none" />
          <span className="ml-[6px] flex"><Check id="is-var" /></span>
          <label htmlFor="is-var" className="ml-[4px] text-white">是变量</label>
          <a href="#edit" className="ml-[18px] border-b border-dotted border-[#7fa8e8] text-[#7fa8e8]">编辑WBP_Inventory</a>
        </div>
        <div className="flex items-center pb-2 pl-2 pr-1 pt-4">
          <div className="flex h-[22px] flex-1 items-center rounded-full border border-[#353535] bg-[#0f0f0f] pl-1">
            <SearchIcon />
            <input aria-label="搜索" placeholder="搜索" className="ml-2 h-5 flex-1 bg-transparent pb-[2px] text-[13px] outline-none placeholder:text-[#575757]" />
          </div>
          <button aria-label="属性矩阵" className="ml-[13px] flex"><TableIcon /></button>
          <button aria-label="设置" className="ml-[10px] flex"><GearIcon /></button>
        </div>
        <div className="flex bg-[#1a1a1a]">
          <div className="flex min-w-0 flex-1 flex-col">
            <Category title="插槽（垂直框插槽）" />
            <Row label="填充" arrow="closed"><NumberBox label="填充" value="0.0" wide /></Row>
            <Row label="尺寸" reset={false}>
              <div className="ml-[2px] flex h-[23px] rounded-[5px] bg-[#0f0f0f] p-px text-[13px]">
                <button className="w-[42px] rounded bg-[#383838] text-white">自动</button><button className="w-[43px]">填充</button>
              </div>
            </Row>
            <Row label="水平对齐"><AlignGroup label="水平对齐" icons={H_ICONS} /></Row>
            <Row label="垂直对齐"><AlignGroup label="垂直对齐" icons={V_ICONS} /></Row>
            <Category title="外观" />
            <Row label="颜色和不透明度" arrow="open" nested><button aria-label="颜色" className="h-5 w-[120px] rounded bg-white" /><Bind /></Row>
            {["R", "G", "B", "A"].map((c) => <Row key={c} label={c} child><NumberBox label={c} value="1.0" /></Row>)}
            <Row label="前景颜色" arrow="closed" nested>
              <button aria-label="前景颜色" className="h-5 w-[199px] rounded bg-[#ff00ff]" />
              <span className="ml-[7px] flex"><Check id="inherit" checked /></span>
              <label htmlFor="inherit" className="ml-[2px] text-white">继承</label>
              <Bind />
            </Row>
            <Row label="填充" arrow="closed"><NumberBox label="填充" value="0.0" wide /></Row>
            <Category title="可访问性" />
            <Row label="重载可访问默认值" reset={false}><Check id="override" label="重载可访问默认值" /></Row>
            <Row label="可访问子项" reset={false} disabled><Check id="children" checked disabled label="可访问子项" /></Row>
            <Row label="可访问行为" reset={false} disabled>
              <Picker label="可访问行为" value="不可访问" className="h-[22px] w-20 rounded border border-[#444] bg-[#343434] text-[#959595]" pad="pl-[7px] pr-5 text-[11px]" chevron="text-[#959595] mr-1" />
            </Row>
          </div>
          <div className="w-4 px-1 pt-[2px]"><div className="h-[172px] rounded-full bg-[#575757]" /></div>
        </div>
      </div>
    </section>
  );
}

function StatusBar() {
  return (
    <footer className="flex h-8 items-center bg-[#242424] text-[13px] leading-4">
      <button className="flex h-full w-[119px] items-center gap-1 pl-[11px]"><FolderSearchIcon className="size-4 text-[#c0c0c0]" />内容侧滑菜单</button>
      <Sep />
      <button className="flex h-full w-[66px] items-center gap-1 pl-[10px]">
        <svg className="size-4" viewBox="0 0 16 16" aria-hidden="true"><path fill="#c0c0c0" d="M0 7h16v9H0z" /><path fill="#999" d="m0 3 15-3 .5 3L1 6z" /><path stroke="#242424" strokeWidth="1.500" d="m3 5 2-4M8 4l2-4M12 3l2-4" /><path stroke="#444" d="M1 10.500h14M8 11v4" /></svg>
        动画
      </button>
      <Sep />
      <button className="flex h-full w-[92px] items-center gap-[6px] pl-[11px]">
        <svg className="h-4 w-[13px]" viewBox="0 0 13 16" aria-hidden="true"><path fill="#c0c0c0" d="M0 2h13v14H0z" /><path stroke="#242424" strokeWidth="1.300" d="M2.500 0v4M6.500 0v4M10.500 0v4" /><path fill="none" stroke="#222" strokeWidth="1.400" d="m3 7 3 2.500L3 12M7 12.500h4" /></svg>
        输出日志
      </button>
      <Sep />
      <div className="flex items-center pl-[14px]">
        <svg className="h-[13px] w-4" viewBox="0 0 16 13" fill="none" stroke="#c0c0c0" aria-hidden="true"><path strokeWidth="1.300" d="M.7.700h14.600v11.600H.7z" /><path strokeWidth="1.400" d="m3 3.500 3.500 3L3 9.500M8 10h5" /></svg>
        <Picker label="控制台类型" value="Cmd" className="h-6 w-[56px]" pad="pl-1 pr-5 text-[13px]" chevron="-mr-[2px] text-[#c0c0c0]" />
      </div>
      <input aria-label="输入控制台命令" placeholder="输入控制台命令" className="ml-[4px] h-[22px] w-[299px] rounded border border-[#353535] bg-[#0f0f0f] pb-[2px] pl-2 text-[12px] outline-none placeholder:text-[#575757]" />
      <span className="ml-2 flex"><Sep /></span>
      <div className="ml-auto flex h-full items-center">
        <Sep />
        <button className="flex h-full w-[111px] items-center gap-1 pl-3">
          <svg className="h-4 w-[17px]" viewBox="0 0 17 16" aria-hidden="true"><path fill="#c0c0c0" d="M0 0h10l3 3v5l-5 6H0z" /><path fill="#242424" d="M3 1h6v4H3z" /><path fill="#ddd" d="M6 1h1.500v3H6z" /><path fill="#777" d="M2 8h8v5H2z" /><circle cx="11.500" cy="11" r="4.500" fill="#c0c0c0" /><path fill="none" stroke="#242424" strokeWidth="1.500" d="m9 11 2 2 3.500-4" /></svg>
          所有已保存
        </button>
        <Sep />
        <button className="flex h-full w-[119px] items-center gap-[6px] pl-[14px]">
          <svg className="h-4 w-[14px]" viewBox="0 0 14 16" aria-hidden="true"><g fill="#c0c0c0"><circle cx="3" cy="3" r="2.500" /><circle cx="11" cy="3" r="2.500" /><circle cx="3" cy="13.300" r="2.500" /></g><path fill="none" stroke="#c0c0c0" strokeWidth="1.300" d="M3 4v8M11 4c0 3-1 4.500-8 4.500" /></svg>
          版本控制<Chevron />
        </button>
      </div>
    </footer>
  );
}

export default function App() {
  return (
    <div className="flex min-h-screen flex-col bg-[#151515] font-['Roboto','Noto_Sans_CJK_SC',sans-serif] text-[#c0c0c0] [text-spacing-trim:space-all]">
      <TitleBar />
      <Toolbar />
      <div className="flex flex-1 gap-[5px] py-1 pl-1 pr-[3px]">
        <aside className="flex w-[447px] shrink-0 flex-col gap-[6px]"><PalettePanel /><HierarchyPanel /></aside>
        <Designer />
        <aside className="flex w-[643px] shrink-0 flex-col gap-[6px]">
          <DetailsPanel />
          <section className="flex flex-1 flex-col">
            <div className="flex"><PanelTab active onlyText title="ViewModelPanel" /></div>
            <div className="flex flex-1 items-center justify-center bg-[#242424] text-[13px]">未识别的选项卡</div>
          </section>
        </aside>
      </div>
      <StatusBar />
      <div aria-hidden="true" className="relative h-2 overflow-hidden border-t border-[#aaa8b4] bg-gradient-to-r from-[#dfe3f3] via-[#dce3ee] to-[#dcdaea]">
        <span className="absolute left-[589px] top-[3px] h-2 w-[39px] rounded-t bg-[#eaaaa8]" />
        <span className="absolute left-[1478px] top-1 size-3 rounded-full bg-[#c4302e]" />
      </div>
    </div>
  );
}
